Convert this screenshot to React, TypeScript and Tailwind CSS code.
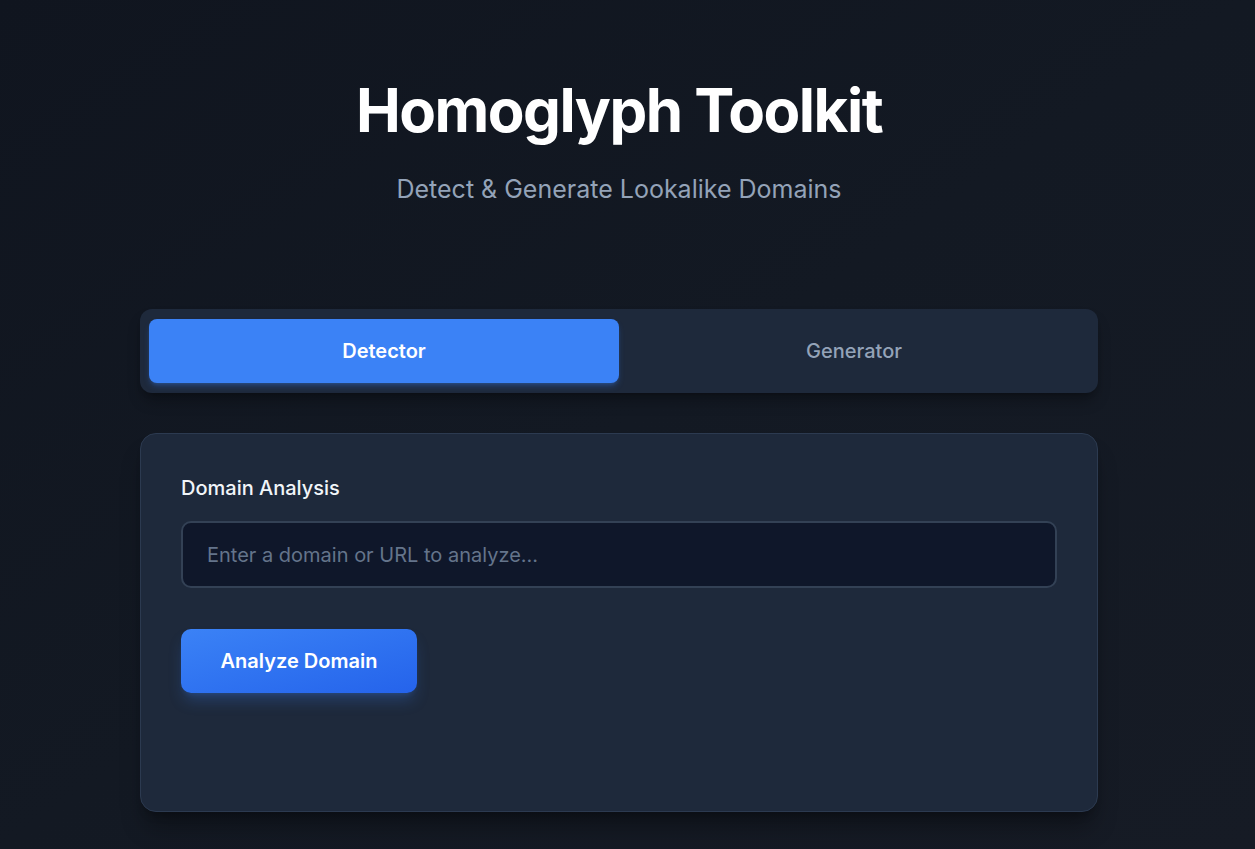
import { useState } from "react"

export default function App() {
    const [tab, setTab] = useState<"detector" | "generator">("detector")

    return (
        <div
            className="min-h-screen w-full bg-gradient-to-br from-[#10151f] via-[#131923] to-[#161b25] text-white"
            style={{ fontFamily: "Inter, 'Noto Sans', sans-serif" }}
        >
            <div className="pr-[17px] pt-20 pb-10 flex flex-col items-center">
                <h1 className="text-6xl leading-none font-bold tracking-tight mb-8">Homoglyph Toolkit</h1>
                <p className="text-[25px] leading-8 text-[#94a3b8] mb-[104px] mt-[1px]">Detect &amp; Generate Lookalike Domains</p>

                <div className="w-[958px] flex flex-col gap-[40px]">
                    <div className="flex px-[9px] py-[10px] rounded-xl bg-[#1e293b] shadow-lg shadow-black/30">
                        <button
                            onClick={() => setTab("detector")}
                            className={
                                tab === "detector"
                                    ? "flex-1 h-[64px] rounded-lg bg-[#3b82f6] text-white text-xl font-semibold shadow-md shadow-[#3b82f6]/30"
                                    : "flex-1 h-[64px] rounded-lg text-[#94a3b8] text-xl font-medium"
                            }
                        >
                            Detector
                        </button>
                        <button
                            onClick={() => setTab("generator")}
                            className={
                                tab === "generator"
                                    ? "flex-1 h-[64px] rounded-lg bg-[#3b82f6] text-white text-xl font-semibold shadow-md shadow-[#3b82f6]/30"
                                    : "flex-1 h-[64px] rounded-lg text-[#94a3b8] text-xl font-medium"
                            }
                        >
                            Generator
                        </button>
                    </div>

                    <div className="h-[379px] rounded-2xl border border-[#2c3a50] bg-[#1e293b] px-10 pt-[40px] shadow-xl shadow-black/30">
                        <label className="block text-xl font-medium leading-7 mb-[19px] text-[#f1f5f9]">
                            Domain Analysis
                        </label>
                        <input
                            type="text"
                            placeholder="Enter a domain or URL to analyze..."
                            className="w-full h-[67px] rounded-[10px] border-2 border-[#334155] bg-[#0f172a] px-6 text-xl text-white placeholder:text-[#64748b] outline-none"
                        />
                        <button className="mt-[41px] w-[236px] h-[64px] rounded-[10px] bg-gradient-to-br from-[#3b82f6] to-[#2563eb] text-xl font-semibold text-white shadow-lg shadow-[#3b82f6]/25">
                            Analyze Domain
                        </button>
                    </div>
                </div>
            </div>
        </div>
    )
}
